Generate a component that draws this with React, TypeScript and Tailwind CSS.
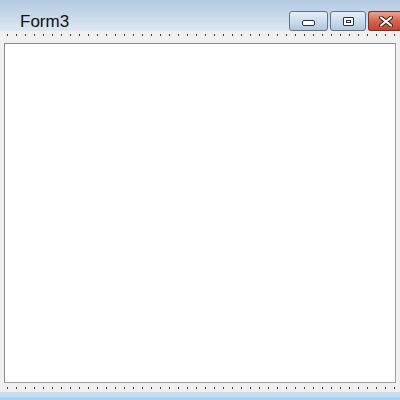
import React from 'react';

const dots = Array.from({ length: 44 }, (_, i) => i);

function DotRow() {
  return (
    <div className="flex h-[2px] gap-[8px] pl-[3px]">
      {dots.map((i) => (
        <span key={i} className="h-[2px] w-[1px] shrink-0 bg-[#444]" />
      ))}
    </div>
  );
}

export default function App() {
  return (
    <div className="flex h-[400px] w-[400px] flex-col overflow-hidden bg-[#f0f0f0] font-['Liberation_Sans',Arial,sans-serif]">
      {/* title bar */}
      <div className="flex h-[31px] shrink-0 items-start bg-gradient-to-b from-[#b3c9e1] to-[#dfe8f2]">
        <span className="ml-[20px] mt-[13px] text-[17px] leading-[17px] text-[#111]">Form3</span>
        <div className="ml-auto mt-[11px] flex gap-[2px]">
          <button className="flex h-[20px] w-[39px] items-end justify-center rounded-[3px] border border-[#5e7590] bg-gradient-to-b from-[#e7eff8] via-[#cddcec] to-[#b2c6dc] pb-[4px]">
            <span className="h-[6px] w-[13px] rounded-[2px] border border-[#243447] bg-white" />
          </button>
          <button className="flex h-[20px] w-[36px] items-center justify-center rounded-[3px] border border-[#5e7590] bg-gradient-to-b from-[#e7eff8] via-[#cddcec] to-[#b2c6dc]">
            <span className="flex h-[9px] w-[11px] items-center justify-center rounded-[1px] border border-[#243447] bg-white">
              <span className="h-[3px] w-[5px] border border-[#243447] bg-white" />
            </span>
          </button>
          <button className="flex h-[20px] w-[32px] items-center justify-center rounded-l-[3px] border border-r-0 border-[#7a3025] bg-gradient-to-b from-[#e9a595] via-[#d4654f] to-[#c24430] pl-[2px]">
            <svg width="14" height="11" viewBox="0 0 14 11">
              <path d="M2 1.5 L12 9.5 M12 1.5 L2 9.5" stroke="#3a1a14" strokeWidth="4" strokeLinecap="round" />
              <path d="M2 1.5 L12 9.5 M12 1.5 L2 9.5" stroke="#fff" strokeWidth="2.2" strokeLinecap="round" />
            </svg>
          </button>
        </div>
      </div>

      {/* body */}
      <div className="flex flex-1 flex-col px-[4px] pt-[3px]">
        <DotRow />
        <div className="mt-[7px] h-[340px] border border-[#a0a0a0] border-l-[#8c8c8c] border-t-[#8c8c8c] bg-white" />
        <div className="mt-[4px]">
          <DotRow />
        </div>
      </div>

      {/* bottom frame */}
      <div className="h-[5px] shrink-0 bg-[#c9dcf0]" />
      <div className="h-[3px] shrink-0 bg-[#a6d3f2]" />
    </div>
  );
}
